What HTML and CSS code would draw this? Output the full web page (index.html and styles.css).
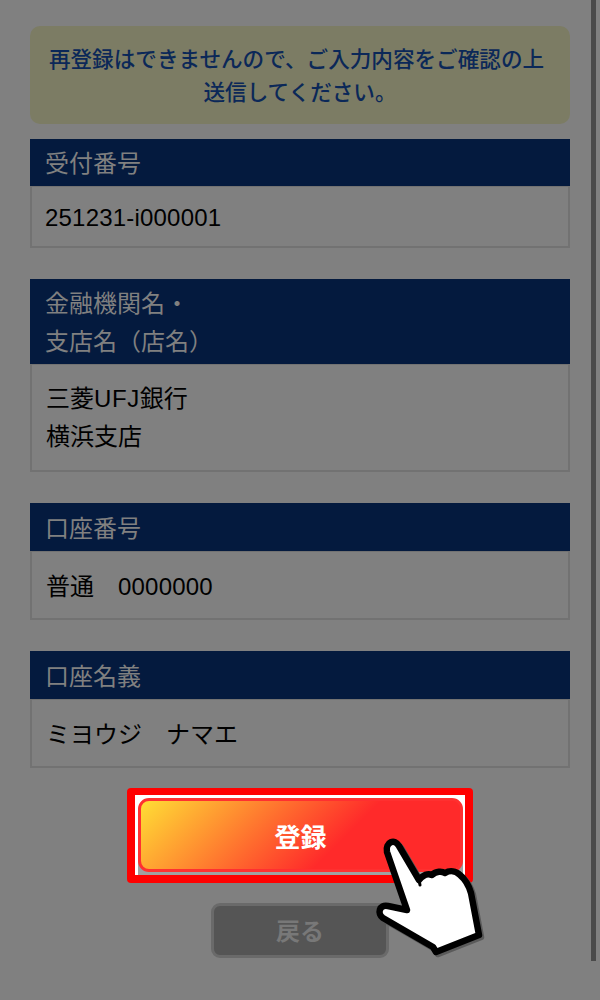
FILE: index.html
```html
<!DOCTYPE html>
<html lang="ja">
<head>
<meta charset="utf-8">
<title>登録内容の確認</title>
<link rel="stylesheet" href="styles.css">
</head>
<body>
<main class="page">
  <p class="notice"><span class="notice-first">再登録はできませんので、ご入力内容をご確認の上</span><br>送信してください。</p>
  <section class="field field-first">
    <h2 class="field-label">受付番号</h2>
    <div class="field-value"><span class="num">251231-i000001</span></div>
  </section>
  <section class="field field-multi">
    <h2 class="field-label">金融機関名・<br>支店名（店名）</h2>
    <div class="field-value">三菱<span class="num-wide">UFJ</span>銀行<br>横浜支店</div>
  </section>
  <section class="field">
    <h2 class="field-label">口座番号</h2>
    <div class="field-value">普通　<span class="num">0000000</span></div>
  </section>
  <section class="field">
    <h2 class="field-label">口座名義</h2>
    <div class="field-value">ミヨウジ　ナマエ</div>
  </section>
  <div class="highlight">
    <div class="submit-frame">
      <button class="submit" type="button">登録</button>
    </div>
  </div>
  <button class="back" type="button">戻る</button>
</main>
<div class="scroll-thumb"></div>
<svg class="hand" viewBox="0 0 120 130" aria-hidden="true">
  <path class="hand-shadow" d="M37 80 L17 22 C15 12 25 8 29 16 L49 50 C53 45 58 43 62 45 C66 41 72 41 75 43 C80 40 86 41 90 45 C96 50 99 56 101 63 L109 105 L66 122 L63 117 L13 88 C7 84 9 74 18 76 Z"/>
  <path class="hand-body" d="M37 80 L17 22 C15 12 25 8 29 16 L49 50 C53 45 58 43 62 45 C66 41 72 41 75 43 C80 40 86 41 90 45 C96 50 99 56 101 63 L109 105 L66 122 L63 117 L13 88 C7 84 9 74 18 76 Z"/>
  <path class="hand-crease" d="M49 50 L50 55"/>
</svg>
</body>
</html>
```

FILE: styles.css
```css
* { box-sizing: border-box; }

html, body {
  margin: 0;
  height: 1000px;
  overflow: hidden;
  background: #808080;
}

body {
  position: relative;
  font-family: "Liberation Sans", "Noto Sans CJK JP", sans-serif;
  color: #000;
}

.page {
  padding: 26px 30px 0;
  display: flex;
  flex-direction: column;
}

.notice {
  margin: 0;
  height: 98px;
  padding: 15px 0 0;
  background: #7c7c64;
  border-radius: 10px;
  color: #0b2858;
  font-size: 21.6px;
  font-weight: 500;
  font-family: "Noto Sans CJK JP", sans-serif;
  line-height: 33px;
  text-align: center;
}

.notice-first { padding-right: 7px; }

.field { margin-bottom: 31px; }

.field-first { margin-top: 15px; }

.field-label {
  margin: 0;
  padding: 5px 15px;
  background: #041a3e;
  color: #808080;
  font-size: 24px;
  font-weight: 400;
  line-height: 38px;
  font-family: "Noto Sans CJK JP", sans-serif;
}

.field-value {
  padding: 16px 14px 12px;
  border: 2px solid #727272;
  border-top: 1px solid #727272;
  font-size: 24px;
  line-height: 38px;
}

.field-multi .field-label { padding: 4px 15px 5px; }

.field-multi .field-value { padding: 15px 14px 14px; }

.field-first .field-label { padding: 4px 15px 5px; }

.field-first .field-value { padding: 12px 14px 9px; }

.field-first .num { margin-left: -1px; }

.num { letter-spacing: 0.2px; }

.num-wide { letter-spacing: 0.6px; }

.highlight {
  align-self: center;
  width: 346px;
  height: 95px;
  margin-top: -11px;
  padding: 7px 8px 8px;
  border-radius: 4px;
  background: #f00;
}

.submit-frame {
  height: 80px;
  border-top: 3px solid #fff;
  border-left: 3px solid #fff;
  border-right: 2px solid #fff;
  background: linear-gradient(#fff 50%, #a0a0a0 50%);
}

.submit {
  display: block;
  width: 100%;
  height: 74px;
  padding: 0;
  border: 3px solid #ff3030;
  border-radius: 11px;
  background: linear-gradient(135deg, #ffdd35 0%, #ff2a2a 62%, #ff2a2a 100%);
  color: #fff;
  font-size: 26px;
  font-weight: 700;
  font-family: "Noto Sans CJK JP", sans-serif;
}

.back {
  align-self: center;
  width: 178px;
  height: 55px;
  margin-top: 20px;
  padding: 0 0 3px;
  border: 3px solid #6a6a6a;
  border-radius: 9px;
  background: #555;
  color: #787878;
  font-size: 24px;
  font-weight: 700;
  font-family: "Noto Sans CJK JP", sans-serif;
}

.scroll-thumb {
  position: absolute;
  top: 0;
  right: 4px;
  width: 5px;
  height: 961px;
  background: #4a4a4a;
}

.hand {
  position: absolute;
  left: 370px;
  top: 830px;
  width: 120px;
  height: 130px;
  overflow: visible;
}

.hand-shadow {
  fill: #5a5a5a;
  stroke: #5a5a5a;
  stroke-width: 6.5;
  stroke-linejoin: round;
  transform: translate(2px, 2px);
}

.hand-body {
  fill: #fff;
  stroke: #000;
  stroke-width: 6.5;
  stroke-linejoin: round;
}

.hand-crease {
  fill: none;
  stroke: #000;
  stroke-width: 3;
  stroke-linecap: round;
}
```
